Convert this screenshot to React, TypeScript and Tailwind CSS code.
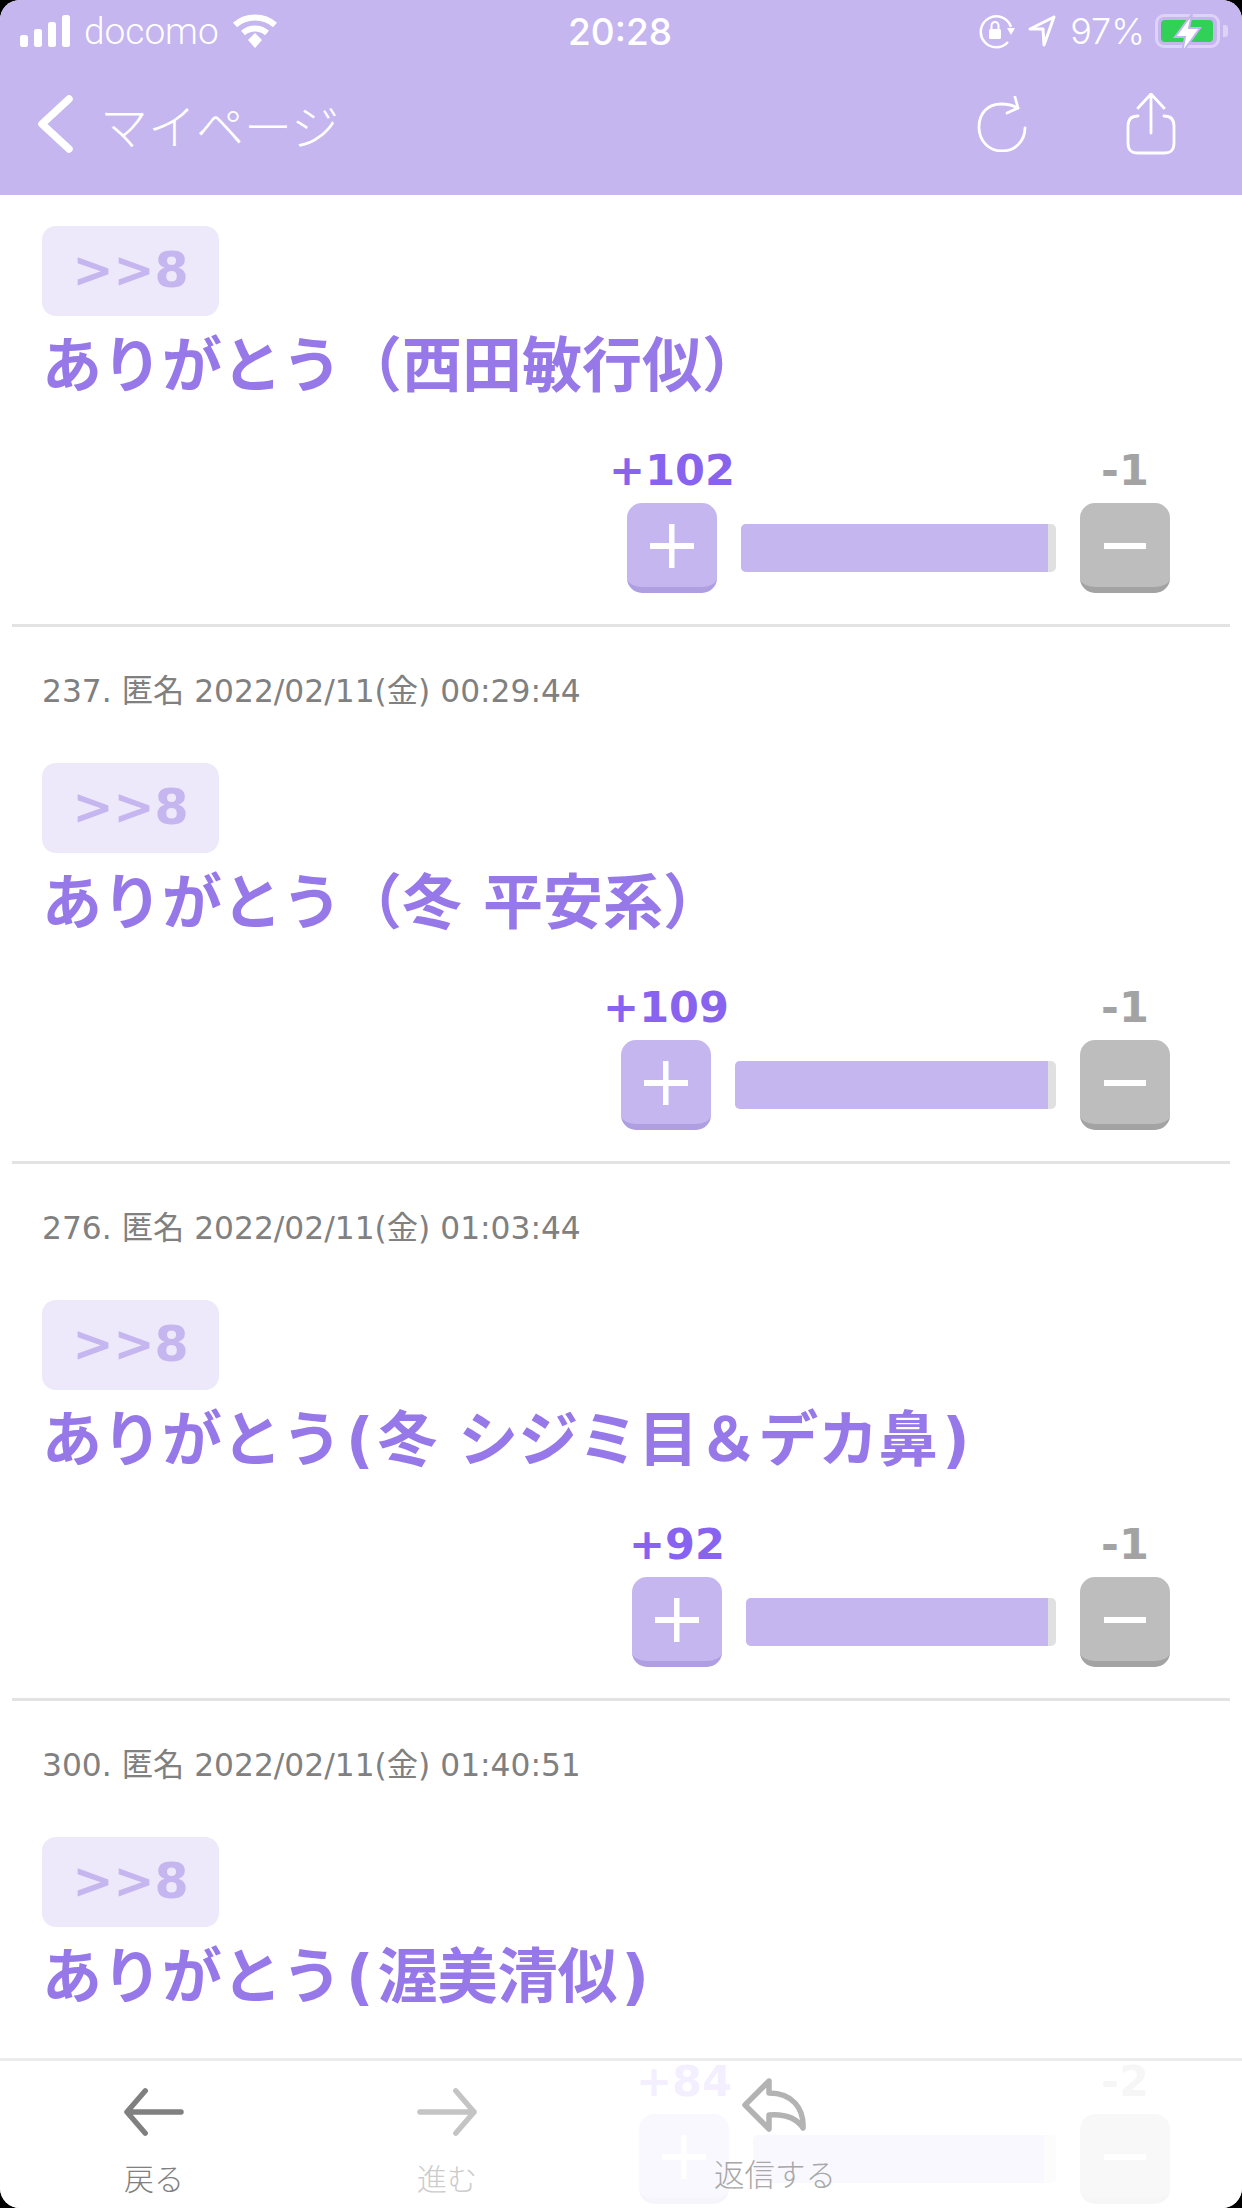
const Paren = ({ children }: { children: string }) => <span className="px-[4px]">{children}</span>;

const posts = [
  { id: 1, meta: "", title: <>ありがとう（西田敏行似）</>, plus: "+102", minus: "-1", barWidth: 315, fill: 97.4 },
  { id: 237, meta: "237. 匿名 2022/02/11(金) 00:29:44", title: <>ありがとう（冬 平安系）</>, plus: "+109", minus: "-1", barWidth: 321, fill: 97.5 },
  { id: 276, meta: "276. 匿名 2022/02/11(金) 01:03:44", title: <>ありがとう<Paren>(</Paren>冬 シジミ目＆デカ鼻<Paren>)</Paren></>, plus: "+92", minus: "-1", barWidth: 310, fill: 97.4 },
  { id: 300, meta: "300. 匿名 2022/02/11(金) 01:40:51", title: <>ありがとう<Paren>(</Paren>渥美清似<Paren>)</Paren></>, plus: "+84", minus: "-2", barWidth: 303, fill: 96 },
];

const StatusBar = () => (
  <div className="flex h-[62px] items-center pl-5 pr-[14px] text-white">
    <div className="flex flex-1 items-center">
      <svg width="50" height="32" viewBox="0 0 50 32" fill="#fff">
        <rect x="0" y="20" width="8" height="12" rx="2.5" />
        <rect x="14" y="14" width="8" height="18" rx="2.5" />
        <rect x="28" y="7" width="8" height="25" rx="2.5" />
        <rect x="42" y="0" width="8" height="32" rx="2.5" />
      </svg>
      <span className="ml-[14px] font-['Roboto',sans-serif] text-[37px] leading-none font-light">docomo</span>
      <svg className="ml-[13px]" width="46" height="34" viewBox="0 0 46 34" fill="none" stroke="#fff">
        <path d="M3 11 C14 1 32 1 43 11" strokeWidth="6" />
        <path d="M11 19 C18 13 28 13 35 19" strokeWidth="6" />
        <path d="M16 26 L23 19 L30 26 L23 34 Z" fill="#fff" stroke="none" />
      </svg>
    </div>
    <span className="mr-[8px] font-['Inter',sans-serif] text-[37px] leading-none font-medium">20:28</span>
    <div className="flex flex-1 items-center justify-end">
      <svg width="36" height="36" viewBox="0 0 36 36" fill="none" stroke="#fff" strokeWidth="2.5">
        <path d="M32 14 A15.5 15.5 0 1 0 29 29" />
        <path d="M28 15 L36 15 L32 22 Z" fill="#fff" stroke="none" />
        <rect x="10" y="16" width="12" height="10" rx="1.5" fill="#fff" stroke="none" />
        <path d="M12.5 16 V12.5 A3.5 3.5 0 0 1 19.5 12.5 V16" strokeWidth="2" />
      </svg>
      <svg className="ml-[13px]" width="28" height="34" viewBox="0 0 28 34" fill="none" stroke="#fff" strokeWidth="3" strokeLinejoin="round">
        <path d="M2 15 L26 3 L16 31 L15 15 Z" />
      </svg>
      <span className="ml-[14px] font-['Inter',sans-serif] text-[36px] leading-none font-light">97%</span>
      <div className="relative ml-[10px] flex h-[34px] items-center">
        <div className="h-[34px] w-[65px] rounded-[9px] border-[3px] border-[#dcd3f6] p-[3px]">
          <div className="h-full w-[52px] rounded-[4px] bg-[#31d158]" />
        </div>
        <div className="ml-[3px] h-[12px] w-[5px] rounded-r-[3px] bg-[#dcd3f6]" />
        <svg className="absolute top-0 left-[18px]" width="30" height="40" viewBox="0 0 30 40">
          <path d="M19 0 L2 23 H12 L9 39 L27 14 H16 Z" fill="#fff" stroke="#c5b6f0" strokeWidth="2" />
        </svg>
      </div>
    </div>
  </div>
);

const NavBar = () => (
  <div className="flex h-[133px] items-center pl-[37px] pr-[66px] pb-[10px] text-white">
    <svg width="36" height="58" viewBox="0 0 36 58" fill="none" stroke="#fff" strokeWidth="7.5" strokeLinecap="round" strokeLinejoin="round">
      <path d="M32 4 L5 29 L32 54" />
    </svg>
    <span className="ml-[27px] font-['Noto_Sans_CJK_JP',sans-serif] text-[48px] leading-none font-light">マイページ</span>
    <div className="ml-auto flex items-center gap-[99px]">
      <svg width="50" height="56" viewBox="0 0 50 56" fill="none" stroke="#fff" strokeWidth="2.8" strokeLinecap="round" strokeLinejoin="round">
        <path d="M48 32 C48 45 38 55 25 55 C11 55 2 44 2 31 C2 17 11 8 24 8 C31 8 36 9 41 12" />
        <path d="M38 1 L41 12 L30 17" />
      </svg>
      <svg width="50" height="62" viewBox="0 0 50 62" fill="none" stroke="#fff" strokeWidth="2.8" strokeLinecap="round" strokeLinejoin="round">
        <path d="M25 40 V2 M12 15 L25 1 L38 15" />
        <path d="M12 23 C6 23 2 26 2 33 V50 C2 57 5 60 12 60 H38 C45 60 48 57 48 50 V33 C48 26 44 23 38 23" />
      </svg>
    </div>
  </div>
);

const VoteRow = ({ plus, minus, barWidth, fill }: { plus: string; minus: string; barWidth: number; fill: number }) => (
  <div className="flex items-end justify-end pr-[72px] font-['DejaVu_Sans',sans-serif] font-bold">
    <div className="flex w-[90px] flex-col items-center">
      <span className="text-[43px] leading-[50px] whitespace-nowrap text-[#8763f0]">{plus}</span>
      <button className="mt-[8px] flex h-[90px] w-[90px] items-center justify-center rounded-[15px] border-b-[6px] border-[#b09fe0] bg-[#c5b6f0] pt-[2px]">
        <svg width="44" height="44" viewBox="0 0 44 44" fill="#fff">
          <rect x="19" y="0" width="5.5" height="44" />
          <rect x="0" y="19" width="44" height="6" />
        </svg>
      </button>
    </div>
    <div className="mb-[21px] ml-[24px] h-[48px] overflow-hidden rounded-[5px] bg-[#e0e0e0]" style={{ width: barWidth }}>
      <div className="h-full bg-[#c5b6f0]" style={{ width: `${fill}%` }} />
    </div>
    <div className="ml-[24px] flex w-[90px] flex-col items-center">
      <span className="text-[43px] leading-[50px] text-[#a3a3a3]">{minus}</span>
      <button className="mt-[8px] flex h-[90px] w-[90px] items-center justify-center rounded-[15px] border-b-[6px] border-[#a3a3a3] bg-[#bdbdbd] pt-[2px]">
        <span className="block h-[6px] w-[42px] bg-white" />
      </button>
    </div>
  </div>
);

const Post = ({ meta, title, plus, minus, barWidth, fill }: (typeof posts)[number]) => (
  <div className={meta ? "pt-[51px]" : "pt-[31px]"}>
    {meta && (
      <div className="h-[26px] px-[42px] font-['DejaVu_Sans','Noto_Sans_CJK_JP',sans-serif] text-[31.3px] leading-[26px] text-[#808080]">
        {meta}
      </div>
    )}
    <div className={meta ? "mt-[59px] px-[42px]" : "px-[42px]"}>
      <div className="flex h-[90px] w-[177px] items-center justify-center rounded-[14px] bg-[#eee9fa] font-['DejaVu_Sans',sans-serif] text-[49px] font-bold text-[#c5b6f0]">
        &gt;&gt;8
      </div>
      <div className="mt-[15px] font-['DejaVu_Sans','Noto_Sans_CJK_JP',sans-serif] text-[60px] leading-[70px] font-bold whitespace-nowrap text-[#9678e8]">
        {title}
      </div>
    </div>
    <div className="mt-[44px] pb-[31px]">
      <VoteRow plus={plus} minus={minus} barWidth={barWidth} fill={fill} />
    </div>
    <div className="mx-[12px] h-[3px] bg-[#e3e3e3]" />
  </div>
);

const BottomBar = () => (
  <div className="absolute right-0 bottom-0 left-0 flex h-[150px] items-start border-t-[3px] border-[#ececec] bg-white/90 font-['Noto_Sans_CJK_JP',sans-serif] text-[30px] leading-none font-light">
    <div className="ml-[94px] flex w-[120px] flex-col items-center pt-[26px] text-[#808080]">
      <svg width="60" height="50" viewBox="0 0 62 50" fill="none" stroke="#808080" strokeWidth="5.5" strokeLinecap="round" strokeLinejoin="round">
        <path d="M59 25 H3 M22 3 L3 25 L22 47" />
      </svg>
      <span className="mt-[25px]">戻る</span>
    </div>
    <div className="ml-[173px] flex w-[120px] flex-col items-center pt-[26px] text-[#cccccc]">
      <svg width="60" height="50" viewBox="0 0 62 50" fill="none" stroke="#c4c4c4" strokeWidth="5.5" strokeLinecap="round" strokeLinejoin="round">
        <path d="M3 25 H59 M40 3 L59 25 L40 47" />
      </svg>
      <span className="mt-[25px]">進む</span>
    </div>
    <div className="ml-[208px] flex w-[120px] flex-col items-center pt-[17px] text-[#a8a8a8]">
      <svg width="66" height="54" viewBox="0 0 66 54" fill="none" stroke="#b3b3b3" strokeWidth="5.5" strokeLinecap="round" strokeLinejoin="round">
        <path d="M27 3 L3 27 L27 51 V37 C40 36 53 38 61 50 C62 30 50 15 27 15 Z" />
      </svg>
      <span className="mt-[26px] text-[30.5px] whitespace-nowrap">返信する</span>
    </div>
  </div>
);

export default function App() {
  return (
    <div className="h-[2208px] w-[1242px] bg-black">
      <div className="relative h-full overflow-hidden rounded-[20px] bg-white">
        <header className="bg-[#c5b6f0]">
          <StatusBar />
          <NavBar />
        </header>
        <main>
          {posts.map((post) => (
            <Post key={post.id} {...post} />
          ))}
        </main>
        <BottomBar />
      </div>
    </div>
  );
}
